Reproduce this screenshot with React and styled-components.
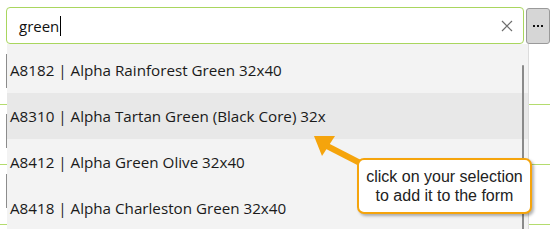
import React from 'react';
import styled, { createGlobalStyle } from 'styled-components';

const GlobalStyle = createGlobalStyle`
  html, body {
    margin: 0;
    padding: 0;
    background: #ffffff;
  }
  body {
    font-family: "Open Sans", "Noto Sans", sans-serif;
    color: #1a1a1a;
  }
`;

const items = [
  'A8182 | Alpha Rainforest Green 32x40',
  'A8310 | Alpha Tartan Green (Black Core) 32x',
  'A8412 | Alpha Green Olive 32x40',
  'A8418 | Alpha Charleston Green 32x40',
];

const Page = styled.div`
  position: relative;
  width: 550px;
  height: 229px;
  overflow: hidden;
`;

const SearchRow = styled.div`
  display: flex;
  gap: 2px;
  padding: 7px 0 0 6px;
`;

const SearchBox = styled.div`
  box-sizing: border-box;
  width: 523px;
  height: 37px;
  border: 1.5px solid #a9d65e;
  border-radius: 4px;
  display: flex;
  align-items: center;
  padding: 0 10px 0 12px;
  background: #fff;
`;

const Query = styled.span`
  font-size: 15px;
  color: #111;
  flex: 1;
  display: flex;
  align-items: center;
`;

const Caret = styled.span`
  display: inline-block;
  width: 1px;
  height: 20px;
  background: #000;
  margin-left: 1px;
`;

const MoreButton = styled.div`
  box-sizing: border-box;
  width: 24px;
  height: 36px;
  margin-top: 1px;
  background: #d6d6d6;
  border: 1px solid #9a9a9a;
  border-radius: 3px;
  display: flex;
  align-items: center;
  justify-content: center;
  gap: 2px;
`;

const Dot = styled.span`
  width: 2px;
  height: 2px;
  background: #111;
`;

const Form = styled.div`
  margin-top: 1px;
`;

const FormRow = styled.div`
  height: 50px;
  border-bottom: 1.5px solid #b4dc6e;
  padding: 9px 0 0 6px;
  box-sizing: content-box;
`;

const FieldEdge = styled.div`
  width: 1px;
  height: 34px;
  background: #8c8c8c;
`;

const Dropdown = styled.div`
  position: absolute;
  top: 44px;
  left: 7px;
  width: 522px;
  height: 190px;
  background: #f3f3f3;
  border-right: 1px solid #dcdcdc;
  padding-top: 3px;
  box-sizing: border-box;
  overflow: hidden;
`;

const Option = styled.div`
  height: 46px;
  display: flex;
  align-items: center;
  padding-left: 3px;
  font-size: 15.2px;
  color: #1a1a1a;
  background: ${(p) => (p.$active ? '#e8e8e8' : 'transparent')};
  white-space: nowrap;
`;

const Scrollbar = styled.div`
  position: absolute;
  top: 21px;
  right: 4px;
  width: 2.5px;
  height: 200px;
  border-radius: 2px;
  background: #8a8a8a;
`;

const Callout = styled.div`
  position: absolute;
  left: 357px;
  top: 158px;
  width: 175px;
  height: 56px;
  box-sizing: border-box;
  border: 2px solid #f5a40c;
  border-radius: 7px;
  background: #fff;
  box-shadow: 2px 2px 3px rgba(0, 0, 0, 0.3);
  display: flex;
  align-items: center;
  justify-content: center;
  text-align: center;
  font-family: "Liberation Sans", Arial, sans-serif;
  font-size: 16px;
  line-height: 19px;
  color: #222;
`;

const ArrowSvg = styled.svg`
  position: absolute;
  left: 300px;
  top: 125px;
`;

const ClearIcon = () => (
  <svg width="12" height="12" viewBox="0 0 12 12">
    <path d="M1 1 L11 11 M11 1 L1 11" stroke="#6e6e6e" strokeWidth="1.2" fill="none" />
  </svg>
);

const App = () => {
  return (
    <Page>
      <GlobalStyle />
      <SearchRow>
        <SearchBox>
          <Query>
            green
            <Caret />
          </Query>
          <ClearIcon />
        </SearchBox>
        <MoreButton>
          <Dot />
          <Dot />
          <Dot />
        </MoreButton>
      </SearchRow>
      <Form>
        {[0, 1, 2, 3].map((n) => (
          <FormRow key={n}>
            <FieldEdge />
          </FormRow>
        ))}
      </Form>
      <Dropdown>
        {items.map((label, idx) => (
          <Option key={idx} $active={idx === 1}>
            {label}
          </Option>
        ))}
        <Scrollbar />
      </Dropdown>
      <ArrowSvg width="70" height="45" viewBox="0 0 70 45">
        <line x1="27" y1="21" x2="64" y2="40" stroke="#f5a40c" strokeWidth="6" />
        <polygon points="14,11 35,11 22,31" fill="#f5a40c" />
      </ArrowSvg>
      <Callout>
        click on your selection
        <br />
        to add it to the form
      </Callout>
    </Page>
  );
};

export default App;
